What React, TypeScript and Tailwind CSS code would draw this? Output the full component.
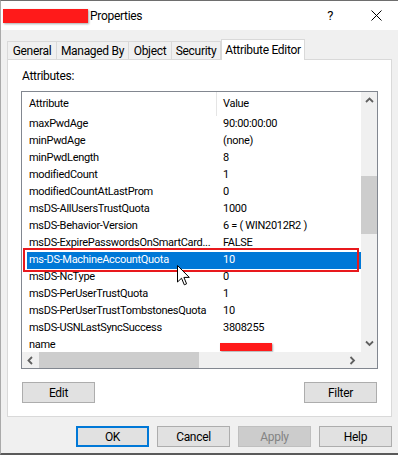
import React from "react"

const rows: [string, string][] = [
  ["maxPwdAge", "90:00:00:00"],
  ["minPwdAge", "(none)"],
  ["minPwdLength", "8"],
  ["modifiedCount", "1"],
  ["modifiedCountAtLastProm", "0"],
  ["msDS-AllUsersTrustQuota", "1000"],
  ["msDS-Behavior-Version", "6 = ( WIN2012R2 )"],
  ["msDS-ExpirePasswordsOnSmartCard...", "FALSE"],
  ["ms-DS-MachineAccountQuota", "10"],
  ["msDS-NcType", "0"],
  ["msDS-PerUserTrustQuota", "1"],
  ["msDS-PerUserTrustTombstonesQuota", "10"],
  ["msDS-USNLastSyncSuccess", "3808255"],
  ["name", ""],
]

const SELECTED = 8

function Chevron({ dir }: { dir: "up" | "down" | "left" | "right" }) {
  const d = {
    up: "M1 5 L4.5 1.5 L8 5",
    down: "M1 1.5 L4.5 5 L8 1.5",
    left: "M5 1 L1.5 4.5 L5 8",
    right: "M1.5 1 L5 4.5 L1.5 8",
  }[dir]
  const horiz = dir === "left" || dir === "right"
  return (
    <svg width={horiz ? 7 : 9} height={horiz ? 9 : 7} viewBox={horiz ? "0 0 7 9" : "0 0 9 7"}>
      <path d={d} fill="none" stroke="#606060" strokeWidth="1.8" />
    </svg>
  )
}

function Button({ label, kind = "normal" }: { label: string; kind?: "normal" | "default" | "disabled" }) {
  const look =
    kind === "default"
      ? "border-2 border-[#0078d7] bg-[#e1e1e1] text-black"
      : kind === "disabled"
        ? "border border-[#bfbfbf] bg-[#cccccc] text-[#838383]"
        : "border border-[#adadad] bg-[#e1e1e1] text-black"
  return (
    <div className={`flex h-[21px] w-[73px] items-center justify-center text-[12px] ${look}`}>
      {label}
    </div>
  )
}

export default function App() {
  return (
    <div
      className="relative h-[455px] w-[398px] overflow-hidden border-l border-t border-b-2 border-l-[#aaaaaa] border-t-[#6e6e6e] border-b-[#5a5a5a] bg-[#f0f0f0] text-black tracking-[-0.3px]"
      style={{ fontFamily: '"Segoe UI", Roboto, sans-serif' }}
    >
      {/* title bar */}
      <div className="flex h-[29px] items-center bg-white text-[12px]">
        <div className="ml-[2px] h-[14px] w-[85px] bg-[#ff1a1a] shadow-[1px_1px_2px_rgba(0,0,0,0.35)]" />
        <span className="ml-[2px]">Properties</span>
        <span className="ml-auto mr-[38px] text-[13px]">?</span>
        <svg width="11" height="11" viewBox="0 0 11 11" className="mr-[16px]">
          <path d="M0.5 0.5 L10.5 10.5 M10.5 0.5 L0.5 10.5" stroke="#000" strokeWidth="1" />
        </svg>
      </div>

      <div className="pl-[6px]">
        {/* tabs */}
        <div className="mt-[9px] flex h-[20px] items-end whitespace-nowrap text-[12px]">
          <div className="flex h-[18px] w-[50px] items-center justify-center border border-b-0 border-[#d9d9d9]">General</div>
          <div className="flex h-[18px] w-[72px] items-center justify-center border border-b-0 border-l-0 border-[#d9d9d9]">Managed By</div>
          <div className="flex h-[18px] w-[43px] items-center justify-center border border-b-0 border-l-0 border-[#d9d9d9]">Object</div>
          <div className="flex h-[18px] w-[49px] items-center justify-center border border-b-0 border-l-0 border-[#d9d9d9]">Security</div>
          <div className="relative z-10 -mb-px flex h-[21px] w-[84px] items-center justify-center border border-b-0 border-[#d9d9d9] bg-white">
            Attribute Editor
          </div>
        </div>

        {/* tab panel */}
        <div className="h-[358px] w-[385px] border border-[#d9d9d9] bg-white text-[12px]">
          <div className="pl-[14px] pt-[9px] leading-[15px]">Attributes:</div>

          <div className="ml-[13px] mt-[7px] flex h-[278px] w-[357px] flex-col border border-[#828790]">
            <div className="flex h-[260px]">
              {/* list content */}
              <div className="relative w-[339px] overflow-hidden text-[11px] tracking-[-0.3px]">
                <div className="flex h-[24px] items-center">
                  <div className="flex h-full w-[194px] items-center pl-[7px]">Attribute</div>
                  <div className="flex h-full items-center border-l border-[#e5e5e5] pl-[6px]">Value</div>
                </div>
                {rows.map(([name, value], i) => {
                  const sel = i === SELECTED
                  return (
                    <div key={name} className="flex h-[17px] items-center">
                      <div className={`ml-[5px] flex h-full flex-1 items-center pl-[2px] ${sel ? "bg-[#0078d7] text-white" : ""}`}>
                        <div className="w-[185px] overflow-hidden whitespace-nowrap">{name}</div>
                        <div className="whitespace-nowrap pl-[9px]">{value}</div>
                      </div>
                    </div>
                  )
                })}
                {/* highlight rectangle */}
                <div className="absolute left-[1px] top-[156px] h-[24px] w-[336px] border-2 border-[#e8191d]" />
                {/* redaction */}
                <div className="absolute left-[198px] top-[251px] h-[8px] w-[52px] bg-[#ff1a1a] shadow-[1px_1px_2px_rgba(0,0,0,0.35)]" />
              </div>
              {/* vertical scrollbar */}
              <div className="flex w-[16px] flex-col bg-[#f0f0f0]">
                <div className="flex h-[17px] items-center justify-center">
                  <Chevron dir="up" />
                </div>
                <div className="mt-[67px] h-[58px] bg-[#cdcdcd]" />
                <div className="flex-1" />
                <div className="flex h-[17px] items-center justify-center">
                  <Chevron dir="down" />
                </div>
              </div>
            </div>
            {/* horizontal scrollbar */}
            <div className="flex h-[16px]">
              <div className="flex w-[339px] items-center bg-[#f0f0f0]">
                <div className="flex w-[17px] items-center justify-center">
                  <Chevron dir="left" />
                </div>
                <div className="h-full w-[160px] bg-[#cdcdcd]" />
                <div className="flex-1" />
                <div className="flex w-[17px] items-center justify-center">
                  <Chevron dir="right" />
                </div>
              </div>
              <div className="w-[16px] bg-[#f0f0f0]" />
            </div>
          </div>

          <div className="ml-[14px] mt-[13px] flex w-[355px] justify-between">
            <Button label="Edit" />
            <Button label="Filter" />
          </div>
        </div>
      </div>

      {/* dialog buttons */}
      <div className="mt-[9px] flex justify-end gap-[8px] pr-[6px]">
        <Button label="OK" kind="default" />
        <Button label="Cancel" />
        <Button label="Apply" kind="disabled" />
        <Button label="Help" />
      </div>

      {/* mouse pointer */}
      <svg className="absolute left-[176px] top-[264px]" width="14" height="22" viewBox="0 0 14 22">
        <path
          d="M0.5 0.5 L0.5 17 L4.5 13.2 L7.3 19.8 L9.6 18.8 L6.9 12.4 L12.3 12.4 Z"
          fill="#fff"
          stroke="#000"
          strokeWidth="1"
          strokeLinejoin="round"
        />
      </svg>
    </div>
  )
}
